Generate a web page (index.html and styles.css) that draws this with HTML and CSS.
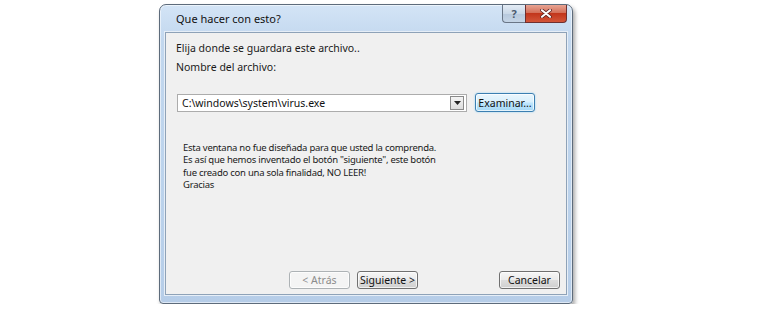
FILE: index.html
```html
<!DOCTYPE html>
<html lang="es">
<head>
<meta charset="utf-8">
<title>Que hacer con esto?</title>
<link rel="stylesheet" href="styles.css">
</head>
<body>
<div class="window">
  <div class="titlebar">
    <span class="title">Que hacer con esto?</span>
    <div class="caption-buttons">
      <span class="cap-btn help">?</span>
      <span class="cap-btn close"><svg width="12" height="9" viewBox="0 0 12 9"><path d="M2 1.2 L10 7.8 M10 1.2 L2 7.8" stroke="#5a2020" stroke-width="3.6" stroke-linecap="round"/><path d="M2 1.2 L10 7.8 M10 1.2 L2 7.8" stroke="#fff" stroke-width="2.1" stroke-linecap="round"/></svg></span>
    </div>
  </div>
  <div class="client">
    <p class="label first">Elija donde se guardara este archivo..</p>
    <p class="label">Nombre del archivo:</p>
    <div class="path-row">
      <div class="combo">
        <span class="combo-text">C:\windows\system\virus.exe</span>
        <span class="combo-arrow"><svg width="7" height="4" viewBox="0 0 7 4"><path d="M0 0 H7 L3.5 4 Z" fill="#222"/></svg></span>
      </div>
      <button class="btn focus">Examinar...</button>
    </div>
    <div class="message">
      <p>Esta ventana no fue diseñada para que usted la comprenda.</p>
      <p>Es así que hemos inventado el botón "siguiente", este botón</p>
      <p>fue creado con una sola finalidad, NO LEER!</p>
      <p>Gracias</p>
    </div>
    <div class="footer">
      <button class="btn disabled">&lt; Atrás</button>
      <button class="btn">Siguiente &gt;</button>
      <span class="spacer"></span>
      <button class="btn">Cancelar</button>
    </div>
  </div>
</div>
</body>
</html>
```
FILE: styles.css
```css
html, body {
  margin: 0;
  padding: 0;
  background: #ffffff;
}
body {
  padding: 4px 0 0 159px;
  font-family: "Noto Sans", "Open Sans", sans-serif;
  font-size: 10.5px;
  color: #1a1a1a;
}
.window {
  width: 402px;
  height: 290px;
  border: 1px solid #5d6b7b;
  border-radius: 7px 7px 4px 4px;
  background: linear-gradient(180deg, #d3e4f6 0%, #c2d7ee 12%, #bcd3ec 60%, #b6cde8 100%);
  box-shadow: 2px 3px 4px rgba(0,0,0,0.35), inset 0 0 0 1px rgba(255,255,255,0.55);
  display: flex;
  flex-direction: column;
  padding: 0 5px 8px 5px;
  box-sizing: content-box;
}
.titlebar {
  height: 27px;
  display: flex;
  align-items: flex-start;
  justify-content: space-between;
}
.title {
  margin: 6px 0 0 11px;
  font-size: 11px;
  color: #111;
}
.caption-buttons {
  display: flex;
}
.cap-btn {
  height: 17px;
  display: flex;
  align-items: center;
  justify-content: center;
  border: 1px solid #6a7686;
  border-top: none;
}
.help {
  width: 22px;
  border-radius: 0 0 0 4px;
  border-right: none;
  background: linear-gradient(180deg, #e4ecf5 0%, #cad8e7 50%, #b7c8dc 51%, #c5d5e6 100%);
  color: #4a5a6e;
  font-weight: bold;
  font-size: 11px;
}
.close {
  width: 40px;
  border-radius: 0 0 4px 0;
  border-color: #6e3030;
  background: linear-gradient(180deg, #e8a493 0%, #d4705a 45%, #c2361c 50%, #d2553a 100%);
}
.client {
  flex: 1;
  background: #f0f0f0;
  border: 1px solid #8ea2b8;
  box-shadow: 0 0 0 1px #e6eef7;
  display: flex;
  flex-direction: column;
  padding: 0 6px 0 10px;
}
.label {
  margin: 0;
  line-height: 19px;
}
.label.first {
  margin-top: 6px;
}
.path-row {
  display: flex;
  align-items: center;
  margin-top: 16px;
}
.combo {
  width: 284px;
  height: 16px;
  margin-left: 1px;
  border: 1px solid #acacac;
  background: #fff;
  display: flex;
  align-items: center;
  justify-content: space-between;
  padding-left: 4px;
}
.combo-text {
  color: #111;
}
.combo-arrow {
  width: 12px;
  height: 12px;
  margin-right: 2px;
  border: 1px solid #8a8a8a;
  background: linear-gradient(180deg, #f4f4f4, #dcdcdc);
  display: flex;
  align-items: center;
  justify-content: center;
}
.btn {
  font: inherit;
  color: #111;
  height: 18px;
  padding: 0;
  border: 1px solid #707070;
  border-radius: 3px;
  background: linear-gradient(180deg, #f6f6f6 0%, #ebebeb 48%, #dddddd 52%, #cfcfcf 100%);
  box-shadow: inset 0 0 0 1px rgba(255,255,255,0.7);
  width: 61px;
}
.btn.focus {
  margin-left: 8px;
  width: 60px;
  height: 19px;
  border-color: #3c7fb1;
  background: linear-gradient(180deg, #eaf6fd 0%, #d9f0fc 48%, #bee6fd 52%, #a7d9f5 100%);
  box-shadow: inset 0 0 0 1px rgba(255,255,255,0.7), 0 0 2px #8fd0f5;
}
.btn.disabled {
  color: #8c8c8c;
  border-color: #adb2b5;
  background: #f4f4f4;
}
.message {
  margin: 30px 0 0 7px;
  font-size: 9.5px;
  letter-spacing: -0.25px;
}
.message p {
  margin: 0;
  line-height: 12.3px;
}
.footer {
  margin-top: auto;
  margin-bottom: 5px;
  display: flex;
  align-items: center;
  padding-left: 113px;
}
.footer .btn + .btn {
  margin-left: 7px;
}
.spacer {
  flex: 1;
}
```
